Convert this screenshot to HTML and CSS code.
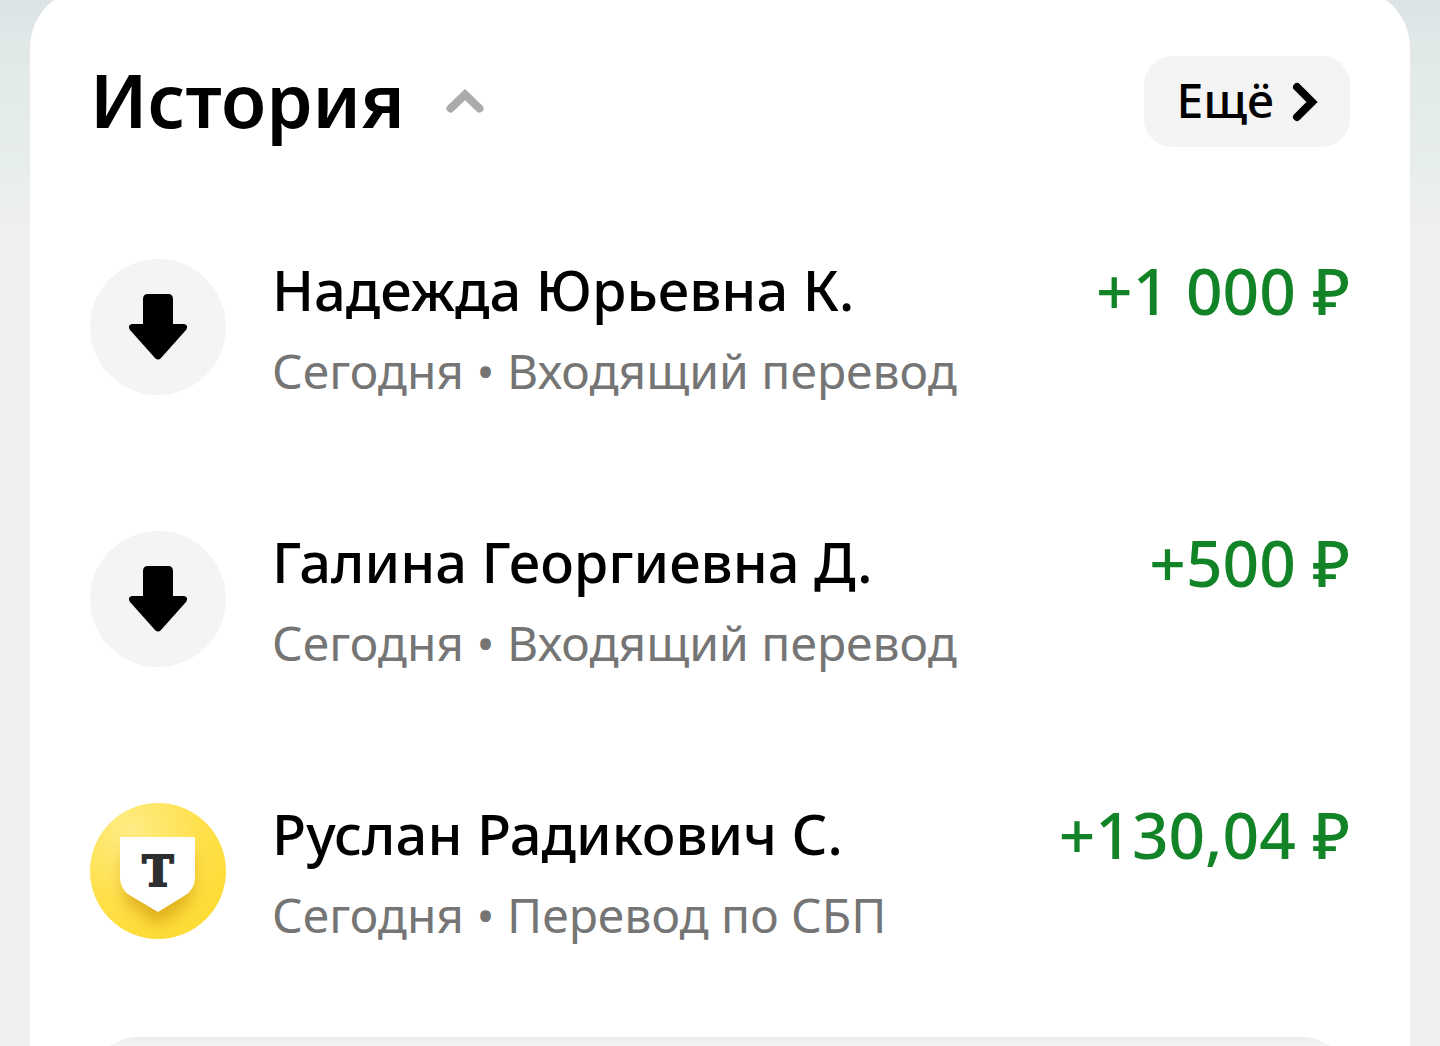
FILE: index.html
```
<!DOCTYPE html>
<html lang="ru">
<head>
<meta charset="utf-8">
<meta name="viewport" content="width=device-width, initial-scale=1">
<title>История</title>
<link rel="stylesheet" href="styles.css">
</head>
<body>

<main class="card">

  <header class="card-header">
    <h1 class="title">История</h1>
    <button class="toggle" type="button" aria-label="Свернуть">
      <svg width="40" height="26" viewBox="0 0 40 26" fill="none" stroke="#ababab" stroke-width="8" stroke-linecap="round">
        <path d="M5.500 19.500L20 5.500L34.500 19.500"/>
      </svg>
    </button>
    <a class="more" href="#">
      <span>Ещё</span>
      <svg width="26" height="40" viewBox="0 0 26 40" fill="none" stroke="#000" stroke-width="8" stroke-linecap="round">
        <path d="M5 5L20 20L5 35"/>
      </svg>
    </a>
  </header>

  <!-- Transactions -->
  <ul class="history">
    <li class="row">
      <span class="avatar">
        <svg width="58" height="66" viewBox="0 0 58 66">
          <path d="M19 0H39Q44 0 44 5V30H55Q60 31 57 36L32 64Q29 67 26 64L1 36Q-2 31 3 30H14V5Q14 0 19 0Z"/>
        </svg>
      </span>
      <div class="info">
        <h2 class="name">Надежда Юрьевна К.</h2>
        <p class="details">Сегодня • Входящий перевод</p>
      </div>
      <span class="amount">+1 000 ₽</span>
    </li>
    <li class="row">
      <span class="avatar">
        <svg width="58" height="66" viewBox="0 0 58 66">
          <path d="M19 0H39Q44 0 44 5V30H55Q60 31 57 36L32 64Q29 67 26 64L1 36Q-2 31 3 30H14V5Q14 0 19 0Z"/>
        </svg>
      </span>
      <div class="info">
        <h2 class="name">Галина Георгиевна Д.</h2>
        <p class="details">Сегодня • Входящий перевод</p>
      </div>
      <span class="amount">+500 ₽</span>
    </li>
    <li class="row">
      <span class="avatar avatar-bank">
        <svg width="136" height="136" viewBox="0 0 136 136">
          <defs>
            <filter id="shade" x="-50%" y="-50%" width="200%" height="200%">
              <feGaussianBlur stdDeviation="8"/>
            </filter>
          </defs>
          <path d="M34 50H102V86Q102 98 92 105L68 122L44 105Q34 98 34 86Z" fill="#c98f00" opacity=".6" filter="url(#shade)"/>
          <path d="M30 34H105V74Q105 87 94 93L68 109L41 93Q30 87 30 74Z" fill="#fff"/>
          <text class="bank-letter" x="68" y="83" text-anchor="middle">Т</text>
        </svg>
      </span>
      <div class="info">
        <h2 class="name">Руслан Радикович С.</h2>
        <p class="details">Сегодня • Перевод по СБП</p>
      </div>
      <span class="amount">+130,04 ₽</span>
    </li>
  </ul>

  <div class="next-panel"></div>

</main>

</body>
</html>
```
FILE: styles.css
```
* {
    box-sizing: border-box;
}

body {
    display: flow-root;
    height: 100vh;
    margin: 0;
    overflow: hidden;
    background: linear-gradient(#dbe3e7 0, #e1e9e8 50px, #e8eeee 175px, #efefef 220px);
    font-family: "Noto Sans", "Open Sans", sans-serif;
    color: #000;
}

h1, h2, p, ul {
    margin: 0;
    padding: 0;
}

.card {
    margin: -12px 30px 0;
    padding: 68px 60px 0;
    border-radius: 60px;
    background: #fff;
}

.card-header {
    display: flex;
    align-items: center;
    height: 91px;
}

.title {
    padding-bottom: 4px;
    font-size: 74px;
    line-height: 88px;
    font-weight: 600;
}

.toggle {
    display: flex;
    margin-left: 40px;
    padding: 0;
    border: 0;
    background: none;
}

.more {
    display: flex;
    align-items: center;
    gap: 18px;
    height: 91px;
    margin-left: auto;
    padding: 0 32px;
    border-radius: 28px;
    background: #f4f4f4;
    color: #000;
    font-size: 48px;
    line-height: 64px;
    font-weight: 500;
    text-decoration: none;
}

.more span {
    padding-bottom: 4px;
}

/* Transactions */
.history {
    display: grid;
    gap: 136px;
    padding-top: 112px;
    list-style: none;
}

.row {
    display: flex;
    gap: 46px;
    height: 136px;
}

.avatar {
    display: flex;
    flex: none;
    align-items: center;
    justify-content: center;
    width: 136px;
    height: 136px;
    border-radius: 50%;
    background: #f4f4f4;
}

.avatar-bank {
    overflow: hidden;
    background: radial-gradient(circle at 30% 20%, #ffec85 0, #ffe04a 50%, #fcd926 100%);
}

.bank-letter {
    fill: #2d2e30;
    stroke: #2d2e30;
    stroke-width: 2px;
    font-family: "DejaVu Serif", serif;
    font-size: 42px;
    font-weight: bold;
}

.info {
    flex: 1;
    white-space: nowrap;
}

.name {
    font-size: 56px;
    line-height: 60px;
    font-weight: 500;
}

.details {
    margin-top: 20px;
    color: #757575;
    font-size: 48px;
    line-height: 64px;
}

.amount {
    color: #128427;
    font-size: 64px;
    line-height: 64px;
    font-weight: 500;
    white-space: nowrap;
}

/* Top of the next block, cut off by the screen edge */
.next-panel {
    height: 120px;
    margin-top: 98px;
    border-radius: 48px;
    background: linear-gradient(#ececec, #f4f4f4 8px);
}
```
